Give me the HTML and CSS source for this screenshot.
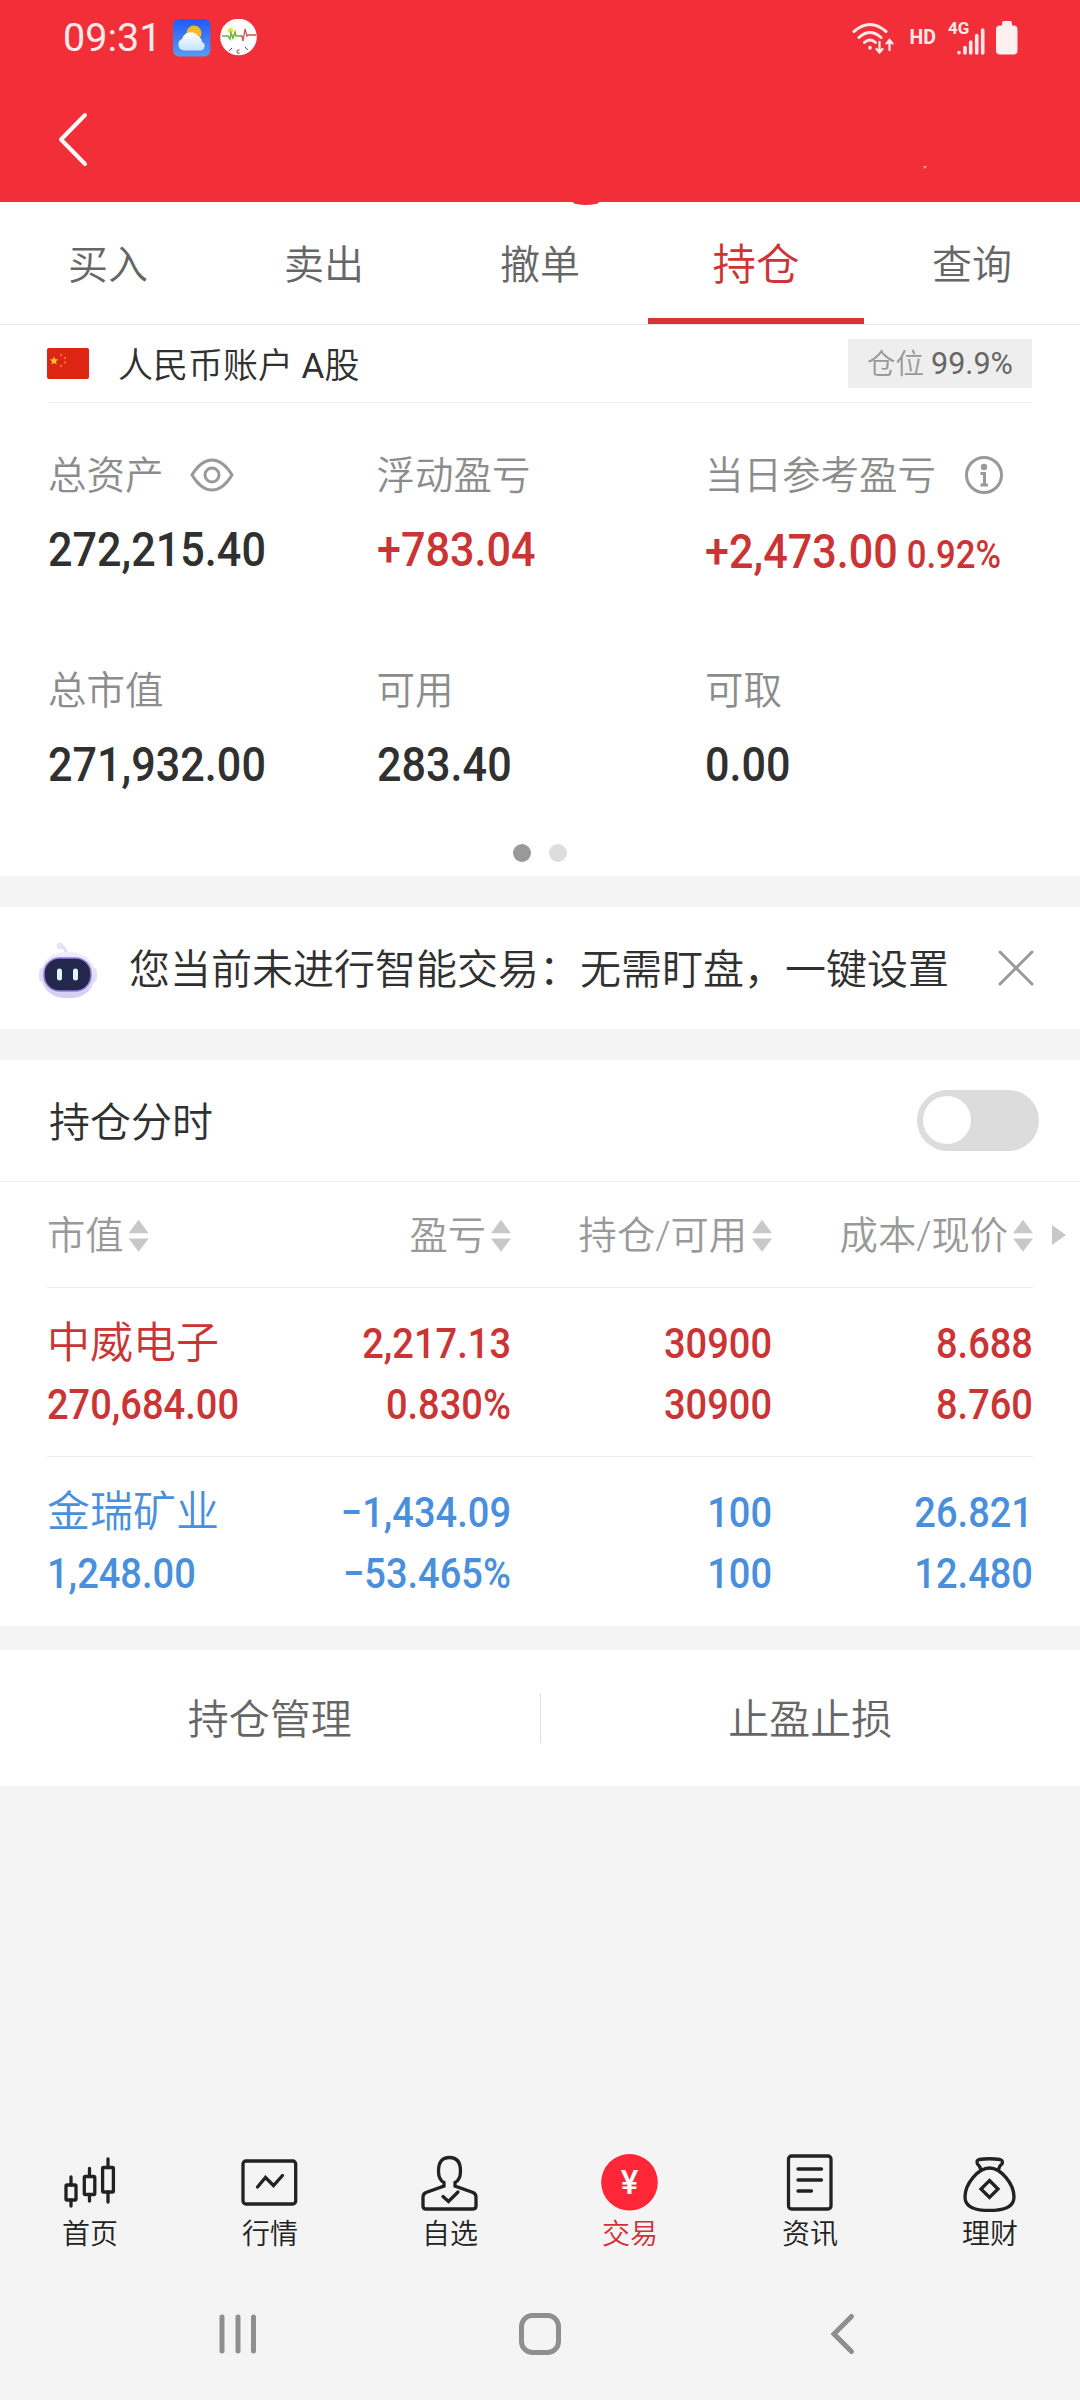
FILE: index.html
```html
<!DOCTYPE html>
<html lang="zh-CN">
<head>
    <meta charset="UTF-8">
    <meta name="viewport" content="width=device-width, initial-scale=1.0">
    <title>持仓</title>
    <link rel="stylesheet" href="styles.css">
</head>
<body>
    <header>
        <div class="status">
            <span class="time">09:31</span>
            <svg class="app" width="38" height="38" viewBox="0 0 38 38">
                <defs>
                    <linearGradient id="sky" x1="0" y1="0" x2="0" y2="1"><stop offset="0" stop-color="#1f5bf8"/><stop offset="1" stop-color="#5a9bf0"/></linearGradient>
                    <linearGradient id="cloud" x1="0" y1="0" x2="0" y2="1"><stop offset="0" stop-color="#fff"/><stop offset="1" stop-color="#c3e2fb"/></linearGradient>
                </defs>
                <rect width="37.5" height="37.5" rx="6" fill="url(#sky)"/>
                <circle cx="21" cy="14" r="7.5" fill="#f9b82c"/>
                <path d="M11 31.500a6 6 0 0 1-2-11.500a9 9 0 0 1 16-3a8 8 0 0 1 4 6a4.500 4.500 0 0 1-1 8.500z" fill="url(#cloud)"/>
            </svg>
            <svg class="app" width="38" height="38" viewBox="0 0 38 38">
                <circle cx="18.500" cy="18" r="18.300" fill="#fff"/>
                <circle cx="10.500" cy="11.500" r="2.500" fill="#dfe629"/>
                <path d="M2 17h6l2 3 1-6 2 5 2-6 1 4h4" fill="none" stroke="#6cb33e" stroke-width="1.500"/>
                <path d="M20 17h2l1 5 2-12 2 7 1-1h8" fill="none" stroke="#c9564e" stroke-width="1.300"/>
                <path d="M9 32l3-3M28 31l-3-3" stroke="#555" stroke-width="1"/>
                <path d="M19.500 31q-3-.500-2.500 2t2.500 1" fill="none" stroke="#555"/>
            </svg>
            <div class="signals">
                <svg width="44" height="34" viewBox="0 0 44 34" fill="none" stroke="#ffe9ea" stroke-width="3" stroke-linecap="round">
                    <path d="M2 10.500q16-14 32 0M7 16.500q11-10 22 0M12.500 21.500q5.500-5 11 0"/>
                    <path d="M18 26.500v.5" stroke-width="3.500"/>
                    <path d="M27.500 21v10M24.500 28l3 3.500 3-3.500M37.500 29V19.500M34.500 22.500l3-3.500 3 3.500" stroke-width="2.300"/>
                </svg>
                <b class="hd">HD</b>
                <span class="cell">
                    <b>4G</b>
                    <svg width="28" height="28" viewBox="0 0 28 28" stroke="#ffe9ea" stroke-width="3.600" stroke-linecap="round">
                        <path d="M2 25.500v.3M8 20.500v5.500M13.700 15v11M19.700 8.500v17.500M25.700 3v23"/>
                    </svg>
                </span>
                <svg width="22" height="34" viewBox="0 0 22 34" fill="#fff0f0">
                    <rect x="6" width="10" height="8" rx="2"/>
                    <rect y="4.500" width="21.500" height="29" rx="4"/>
                </svg>
            </div>
        </div>
        <svg class="back" width="32" height="56" viewBox="0 0 32 56" fill="none" stroke="#fff" stroke-width="4" stroke-linecap="round" stroke-linejoin="round">
            <path d="M28 4L4 28.500 28 53"/>
        </svg>
        <i class="bump"></i>
        <i class="speck"></i>
    </header>

    <nav class="tabs">
        <a>买入</a>
        <a>卖出</a>
        <a>撤单</a>
        <a class="on">持仓</a>
        <a>查询</a>
    </nav>

    <section class="assets">
        <div class="account">
            <svg width="42" height="31" viewBox="0 0 42 31">
                <rect width="42" height="31" rx="2" fill="#dc2613"/>
                <path d="M7 8.500l1.200 2.800 3 .2-2.300 2 .8 3L7 14.900l-2.700 1.600.8-3-2.300-2 3-.2z" fill="#ffc928"/>
                <g fill="#f36b2b"><circle cx="14" cy="7" r="1.200"/><circle cx="18" cy="10" r="1.200"/><circle cx="18" cy="14.500" r="1.200"/><circle cx="14" cy="18" r="1.200"/></g>
            </svg>
            <span>人民币账户 <b>A</b>股</span>
            <div class="ratio">仓位 <b>99.9%</b></div>
        </div>
        <div class="grid">
            <div>
                <label>总资产
                    <svg class="eye" width="44" height="34" viewBox="0 0 44 34" fill="none" stroke="#999" stroke-width="3">
                        <path d="M2 17Q11 2 22 2T42 17Q33 32 22 32T2 17z"/>
                        <circle cx="22" cy="17" r="7"/>
                    </svg>
                </label>
                <strong>272,215.40</strong>
            </div>
            <div>
                <label>浮动盈亏</label>
                <strong class="red">+783.04</strong>
            </div>
            <div>
                <label>当日参考盈亏
                    <svg class="info" width="40" height="40" viewBox="0 0 40 40" fill="none" stroke="#999" stroke-width="3">
                        <circle cx="20" cy="20" r="17.500"/>
                        <circle cx="20" cy="12" r="3.200" fill="#999" stroke="none"/>
                        <path d="M16.500 18.500h4v11M16.500 30h7.500"/>
                    </svg>
                </label>
                <strong class="red today">+2,473.00<small>0.92%</small></strong>
            </div>
            <div>
                <label>总市值</label>
                <strong>271,932.00</strong>
            </div>
            <div>
                <label>可用</label>
                <strong>283.40</strong>
            </div>
            <div>
                <label>可取</label>
                <strong>0.00</strong>
            </div>
        </div>
        <div class="dots"><i class="on"></i><i></i></div>
    </section>

    <section class="notice">
        <svg width="60" height="60" viewBox="0 0 60 60">
            <defs>
                <linearGradient id="shell" x1="0" y1="0" x2="0" y2="1"><stop offset="0" stop-color="#f0effa"/><stop offset="1" stop-color="#d3cdf4"/></linearGradient>
            </defs>
            <circle cx="22" cy="8" r="3.500" fill="#e6e4f6"/>
            <path d="M23 9q5 0 5 6" fill="none" stroke="#e0def5" stroke-width="3"/>
            <rect x="1" y="29" width="58" height="16" rx="5" fill="#e3e0f5"/>
            <rect x="3" y="14" width="54" height="46" rx="23" fill="url(#shell)"/>
            <rect x="6" y="20" width="47" height="33" rx="15.500" fill="#23284c" stroke="#8d80dc" stroke-width="1.500"/>
            <path d="M21.500 33v7M37.500 33v7" stroke="#dff6ff" stroke-width="5" stroke-linecap="round"/>
        </svg>
        <span>您当前未进行智能交易：无需盯盘，一键设置</span>
        <svg class="close" width="36" height="36" viewBox="0 0 36 36" stroke="#999" stroke-width="3" stroke-linecap="round">
            <path d="M2 2l32 32M34 2L2 34"/>
        </svg>
    </section>

    <section class="holdings">
        <div class="chart">
            <span>持仓分时</span>
            <div class="toggle"></div>
        </div>
        <div class="row head">
            <span>市值<i class="sort"></i></span>
            <span>盈亏<i class="sort"></i></span>
            <span>持仓/可用<i class="sort"></i></span>
            <span>成本/现价<i class="sort"></i></span>
            <i class="more"></i>
        </div>
        <div class="row red">
            <div><em>中威电子</em><b>270,684.00</b></div>
            <div><b>2,217.13</b><b>0.830%</b></div>
            <div><b>30900</b><b>30900</b></div>
            <div><b>8.688</b><b>8.760</b></div>
        </div>
        <div class="row blue">
            <div><em>金瑞矿业</em><b>1,248.00</b></div>
            <div><b>−1,434.09</b><b>−53.465%</b></div>
            <div><b>100</b><b>100</b></div>
            <div><b>26.821</b><b>12.480</b></div>
        </div>
    </section>

    <section class="actions">
        <a>持仓管理</a>
        <a>止盈止损</a>
    </section>

    <footer>
        <nav class="menu">
            <a>
                <svg viewBox="0 0 60 60">
                    <rect x="6" y="33" width="10" height="15" rx="1"/>
                    <rect x="24.300" y="24.500" width="10.500" height="18" rx="1"/>
                    <rect x="42.600" y="15.500" width="10.800" height="24.500" rx="1"/>
                    <path d="M11 25v8M11 48v6M29.500 16.500v8M29.500 42.500v6.500M48 7v8.500M48 40v10"/>
                </svg>
                首页
            </a>
            <a>
                <svg viewBox="0 0 60 60">
                    <rect x="3" y="9" width="52.700" height="43" rx="3"/>
                    <path d="M17.500 35l8-9.500 8 8 9-10"/>
                </svg>
                行情
            </a>
            <a>
                <svg viewBox="0 0 60 60">
                    <path d="M24 34v-3.500Q18.500 28 18.500 19Q18.500 5.500 29.500 5.500T40.500 19Q40.500 28 35 30.500V34L53 40.500Q56 42 56 45V54Q56 57 53 57H6Q3 57 3 54V45Q3 42 6 40.500z"/>
                    <path d="M23 44.500l5.500 5 9.500-9.500"/>
                </svg>
                自选
            </a>
            <a class="on">
                <svg viewBox="0 0 60 60">
                    <circle cx="29.500" cy="30.300" r="28.300"/>
                    <text x="29.500" y="42" text-anchor="middle">¥</text>
                </svg>
                交易
            </a>
            <a>
                <svg viewBox="0 0 60 60">
                    <rect x="8.500" y="4" width="42.500" height="53" rx="3"/>
                    <path d="M18 17h23.500M18 28h23.500M18 39h13.500"/>
                </svg>
                资讯
            </a>
            <a>
                <svg viewBox="0 0 60 60">
                    <path d="M29.500 16C41 16 54 32 54 45Q54 58.500 29.500 58.500T5 45C5 32 18 16 29.500 16z"/>
                    <path d="M21 18Q20 14 17.500 12Q16 8.500 19 7.500Q29.500 6 40 7.500Q43.500 8.500 42 12Q39 14 38.500 18"/>
                    <path d="M29.500 28.500l8.500 8.500-8.500 8.500L21 37z"/>
                </svg>
                理财
            </a>
        </nav>
        <div class="keys">
            <svg width="44" height="44" viewBox="0 0 44 44"><path d="M6 5v34M22 5v34M37.500 5v34"/></svg>
            <svg width="44" height="44" viewBox="0 0 44 44"><rect x="3.500" y="3.500" width="37" height="37" rx="11"/></svg>
            <svg width="44" height="44" viewBox="0 0 44 44"><path d="M31.500 4.500L14 22l17.500 17.500"/></svg>
        </div>
    </footer>
</body>
</html>
```
FILE: styles.css
```css
* {
    box-sizing: border-box;
}
body {
    margin: 0;
    min-height: 2400px;
    display: flex;
    flex-direction: column;
    background: #f4f4f4;
    color: #303030;
    font-family: Roboto, 'Noto Sans CJK SC', sans-serif;
    font-weight: 350;
    font-size: 41px;
    line-height: 1;
}
svg {
    display: block;
    flex: none;
}
section {
    background: #fff;
}
.red {
    color: #cb3434;
}
.blue {
    color: #4a8fdc;
}

/* status bar and title bar */
header {
    position: relative;
    height: 202px;
    background: #f22f38;
}
.status {
    display: flex;
    align-items: center;
    height: 76px;
    padding: 0 62px 0 63px;
    color: #ffe9ea;
}
.time {
    width: 110px;
    font-size: 39.5px;
    font-weight: 400;
}
.app {
    margin-right: 10px;
}
.app + .app {
    margin-left: -1px;
}
.signals {
    display: flex;
    align-items: center;
    margin-left: auto;
}
.hd {
    margin: 0 12px 0 14px;
    font-size: 19.5px;
}
.cell {
    position: relative;
    width: 48px;
    padding: 6px 0 0 9px;
}
.cell b {
    position: absolute;
    left: 0;
    top: -1px;
    font-size: 17px;
}
.back {
    margin: 35px 0 0 57px;
}
.bump {
    position: absolute;
    left: 573px;
    bottom: -3px;
    width: 26px;
    height: 6px;
    border-radius: 50%;
    background: #f22f38;
}
.speck {
    position: absolute;
    left: 923px;
    top: 166px;
    border: solid transparent;
    border-width: 3px 2px 0;
    border-top-color: #f7a0a4;
}

.tabs {
    display: flex;
    height: 123px;
    background: #fff;
    border-bottom: 1px solid #e8e8e8;
    color: #666;
    font-size: 40px;
}
.tabs a {
    flex: 1;
    height: 122px;
    line-height: 128px;
    text-align: center;
}
.tabs .on {
    border-bottom: 6px solid #d93232;
    color: #d03235;
    font-size: 43.5px;
}

.assets {
    height: 551px;
    padding: 0 48px;
}
.account {
    display: flex;
    align-items: center;
    height: 78px;
    border-bottom: 1px solid #ececec;
    font-size: 35px;
}
.account svg {
    margin: 0 29px 0 -1px;
}
.account span {
    padding-top: 5px;
}
.account b {
    font-weight: 400;
}
.ratio {
    width: 184px;
    height: 49px;
    margin-left: auto;
    background: #eee;
    color: #999;
    font-size: 28.5px;
    line-height: 50px;
    text-align: center;
}
.ratio b {
    color: #666;
    font-size: 30.5px;
}
.grid {
    display: grid;
    grid-template-columns: 328.5px 328.5px 1fr;
    grid-auto-rows: 215px;
    padding-top: 54px;
}
.grid label {
    display: flex;
    align-items: center;
    height: 38px;
    color: #8c8c8c;
    font-size: 38.5px;
    white-space: nowrap;
}
.eye, .info {
    position: relative;
    top: -1px;
    margin-left: 26px;
}
.info {
    margin-left: 28px;
}
/* condensed figures */
.grid strong {
    display: inline-block;
    margin-top: 31px;
    font-size: 48.5px;
    font-weight: 500;
    white-space: nowrap;
    transform: scaleX(.89);
    transform-origin: left;
}
.grid .today {
    margin-top: 33px;
}
.today small {
    margin-left: 10px;
    font-size: 39px;
}
.dots {
    display: flex;
    justify-content: center;
    gap: 18px;
    margin-top: -43px;
}
.dots i {
    width: 18px;
    height: 18px;
    border-radius: 50%;
    background: #ddd;
}
.dots .on {
    background: #999;
}

.notice {
    display: flex;
    align-items: center;
    height: 122px;
    margin: 31px 0;
    padding-left: 38px;
}
.notice span {
    margin-left: 31px;
    padding-top: 5px;
    white-space: nowrap;
}
.close {
    margin-left: 49px;
}

.chart {
    display: flex;
    align-items: center;
    justify-content: space-between;
    height: 122px;
    padding: 0 41px 0 49px;
    border-bottom: 1px solid #ececec;
}
.chart span {
    padding-top: 6px;
}
.toggle {
    width: 122px;
    height: 61px;
    padding: 6px;
    border-radius: 31px;
    background: #dcdcdc;
}
.toggle::before {
    content: '';
    display: block;
    width: 48px;
    height: 48px;
    border-radius: 50%;
    background: #fff;
}
.row {
    position: relative;
    display: grid;
    grid-template-columns: 203px 261px 261px 261px;
    align-items: center;
    height: 169px;
    margin: 0 47px;
    padding-top: 3px;
    border-bottom: 1px solid #ececec;
}
.row:last-child {
    border: 0;
}
.row > * {
    text-align: right;
    white-space: nowrap;
}
.row > :first-child {
    text-align: left;
}
.head {
    height: 106px;
    color: #999;
    font-size: 38.3px;
}
.sort {
    display: inline-block;
    width: 20px;
    height: 32px;
    margin-left: 5px;
    vertical-align: -3px;
    background: #c8c8c8;
    clip-path: polygon(50% 0, 100% 42%, 0 42%, 50% 0, 50% 100%, 0 58%, 100% 58%, 50% 100%);
}
.more {
    position: absolute;
    right: -33px;
    top: 43px;
    border: solid transparent;
    border-width: 10px 0 10px 14px;
    border-left-color: #c8c8c8;
}
.row em, .row b {
    display: block;
    height: 61px;
    line-height: 61px;
}
.row em {
    font-size: 43px;
    font-style: normal;
}
.row b {
    font-size: 42.5px;
    font-weight: 500;
    transform: scaleX(.895);
    transform-origin: right;
}
.row em + b {
    transform-origin: left;
}

.actions {
    display: flex;
    align-items: center;
    height: 136px;
    margin-top: 24px;
    color: #666;
}
.actions a {
    flex: 1;
    height: 49px;
    line-height: 52px;
    text-align: center;
}
.actions a + a {
    border-left: 1px solid #ddd;
}

footer {
    margin-top: auto;
    height: 248px;
}
.menu {
    display: flex;
    color: #222;
    font-size: 28px;
    text-align: center;
}
.menu a {
    flex: 1;
}
.menu svg {
    width: 60px;
    height: 60px;
    margin: 0 auto 9px;
    fill: none;
    stroke: #222;
    stroke-width: 3.3;
    stroke-linecap: round;
}
.menu .on {
    color: #d22f3c;
}
.menu .on svg {
    fill: #ff2638;
    stroke: none;
}
.menu .on text {
    fill: #fff;
    font-size: 33px;
    font-weight: 500;
}
.keys {
    display: flex;
    justify-content: space-between;
    margin: 63px 216px 0;
    fill: none;
    stroke: #8f8f8f;
    stroke-width: 5;
    stroke-linecap: round;
}
```
